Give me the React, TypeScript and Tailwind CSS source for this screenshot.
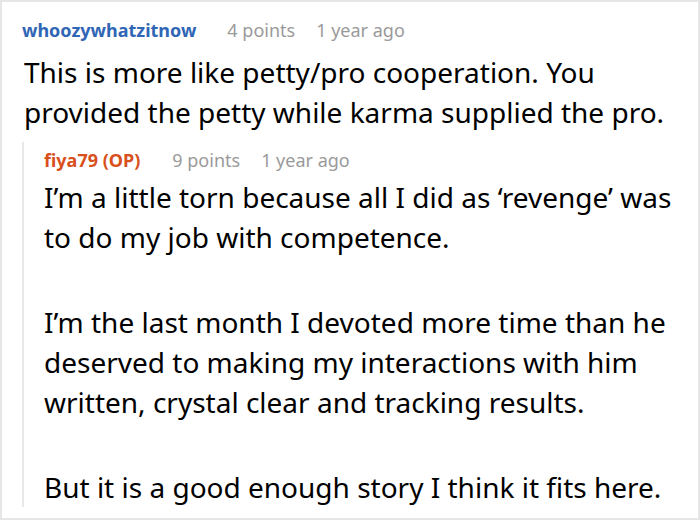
export default function App() {
  return (
    <div
      className="w-[700px] h-[520px] bg-white border-2 border-[#e6e6e6] overflow-hidden text-black"
      style={{ fontFamily: '"Noto Sans", "Open Sans", sans-serif' }}
    >
      <div className="pl-[20px] pr-[12px] pt-[16px]">
        {/* Comment header */}
        <div className="flex items-center text-[18px] leading-[24px]">
          <span className="font-bold text-[#2f66b5]">whoozywhatzitnow</span>
          <span className="ml-[31px] text-[#9a9a9a]">4 points</span>
          <span className="ml-[21px] text-[#9a9a9a]">1 year ago</span>
        </div>
        <p className="mt-[10px] pl-[2px] text-[28px] leading-[40px]">
          This is more like petty/pro cooperation. You provided the petty while karma supplied the pro.
        </p>

        {/* Reply */}
        <div className="mt-[10px] border-l-2 border-[#e8e8e8] pl-[20px] pt-[6px]">
          <div className="flex items-center text-[18px] leading-[24px]">
            <span className="font-bold text-[#d8501c]">fiya79 (OP)</span>
            <span className="ml-[32px] text-[#9a9a9a]">9 points</span>
            <span className="ml-[21px] text-[#9a9a9a]">1 year ago</span>
          </div>
          <div className="mt-[5px] text-[28px] leading-[40px] space-y-[45px]">
            <p>I’m a little torn because all I did as ‘revenge’ was to do my job with competence.</p>
            <p>
              I’m the last month I devoted more time than he deserved to making my interactions with him written, crystal
              clear and tracking results.
            </p>
            <p>But it is a good enough story I think it fits here.</p>
          </div>
        </div>
      </div>
    </div>
  );
}
